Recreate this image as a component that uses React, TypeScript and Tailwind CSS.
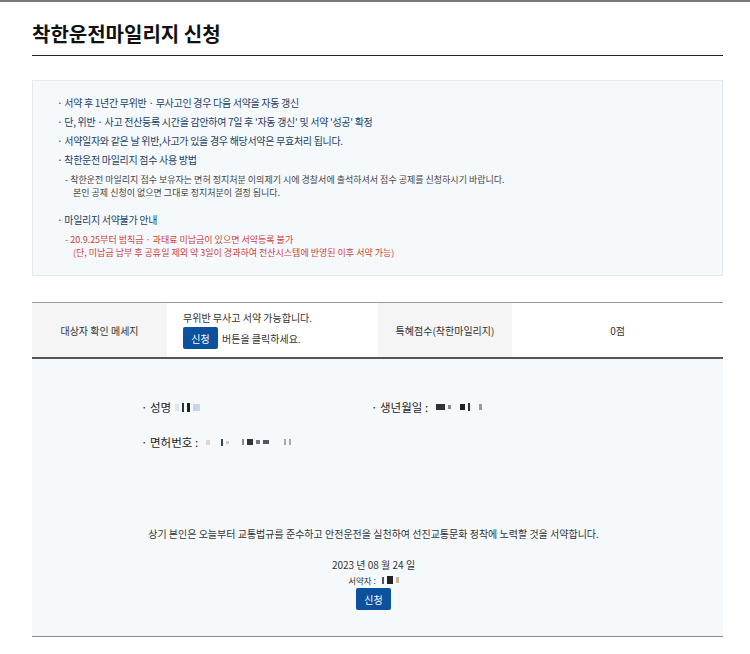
import React from "react";

const font = { fontFamily: '"Noto Sans CJK KR", "Noto Sans", sans-serif' };

function Blur({ blocks }: { blocks: string[] }) {
  // pixelated (censored) value
  return (
    <span className="inline-flex items-center gap-[3px] align-middle">
      {blocks.map((c, i) => (
        <span key={i} className={c} />
      ))}
    </span>
  );
}

function InfoBox() {
  return (
    <div className="mt-[24px] border border-[#e6eaee] bg-[#f6f9fc] pl-[24px] pr-[20px] pt-[12px] pb-[16px] text-[10px] leading-[19px] tracking-[-0.3px] text-[#213e63]">
      <p>· 서약 후 1년간 무위반 · 무사고인 경우 다음 서약을 자동 갱신</p>
      <p>· 단, 위반 · 사고 전산등록 시간을 감안하여 7일 후 '자동 갱신' 및 서약 '성공' 확정</p>
      <p>· 서약일자와 같은 날 위반,사고가 있을 경우 해당서약은 무효처리 됩니다.</p>
      <p>· 착한운전 마일리지 점수 사용 방법</p>
      <div className="pl-[8px] pt-[5px] text-[9px] leading-[12.5px] tracking-normal text-[#444]">
        <p>- 착한운전 마일리지 점수 보유자는 면허 정지처분 이의제기 시에 경찰서에 출석하셔서 점수 공제를 신청하시기 바랍니다.</p>
        <p className="pl-[8px]">본인 공제 신청이 없으면 그대로 정지처분이 결정 됩니다.</p>
      </div>
      <p className="mt-[11px]">· 마일리지 서약불가 안내</p>
      <div className="mt-[4px] pl-[8px] text-[9px] leading-[13px] tracking-normal text-[#cf3f3a]">
        <p>- 20.9.25부터 범칙금 · 과태료 미납금이 있으면 서약등록 불가</p>
        <p className="pl-[8px]">(단, 미납금 납부 후 공휴일 제외 약 3일이 경과하여 전산시스템에 반영된 이후 서약 가능)</p>
      </div>
    </div>
  );
}

function ApplyButton() {
  return (
    <button className="h-[22px] w-[35px] rounded-[2px] bg-[#0b519e] text-[10px] text-white">
      신청
    </button>
  );
}

export default function App() {
  return (
    <div className="min-h-[654px] border-t-2 border-[#7a7a7a] bg-white" style={font}>
      <div className="mx-[32px] w-[691px]">
        <h1 className="pt-[19px] pb-[8px] text-[20px] font-bold leading-[26px] text-[#111] border-b-[1.5px] border-[#222]">
          착한운전마일리지 신청
        </h1>

        <InfoBox />

        <div className="mt-[26px] grid grid-cols-[135px_211px_134px_211px] border-t border-[#9a9a9a] border-b-2 border-b-[#555] text-[10px] text-[#333]">
          <div className="flex h-[54px] items-center justify-center bg-[#f5f5f5]">대상자 확인 메세지</div>
          <div className="flex flex-col justify-center gap-[2px] pl-[16px]">
            <p className="leading-[14px]">무위반 무사고 서약 가능합니다.</p>
            <div className="flex items-center gap-[4px]">
              <ApplyButton />
              <span>버튼을 클릭하세요.</span>
            </div>
          </div>
          <div className="flex items-center justify-center bg-[#f5f5f5]">특혜점수(착한마일리지)</div>
          <div className="flex items-center justify-center">0점</div>
        </div>

        <div className="flex h-[278px] flex-col border-b border-[#8a8a8a] bg-[#f6f9fc] text-[#222]">
          <div className="grid grid-cols-[230px_1fr] pl-[109px] pt-[40px] text-[11.5px] leading-[16px]">
            <div className="flex items-center gap-[4px]">
              <span>· 성명</span>
              <Blur blocks={["h-[7px] w-[4px] bg-[#dbe6f5]", "h-[9px] w-[2px] bg-[#333]", "h-[9px] w-[3px] bg-[#222]", "h-[7px] w-[7px] bg-[#c9d6ea]"]} />
            </div>
            <div className="flex items-center gap-[8px]">
              <span>· 생년월일 :</span>
              <Blur blocks={["h-[6px] w-[9px] bg-[#333]", "h-[4px] w-[3px] bg-[#888]", "ml-[6px] h-[6px] w-[5px] bg-[#222]", "h-[8px] w-[2px] bg-[#333]", "ml-[6px] h-[6px] w-[3px] bg-[#999]"]} />
            </div>
            <div className="col-span-2 mt-[19px] flex items-center gap-[8px]">
              <span>· 면허번호 :</span>
              <Blur blocks={["h-[5px] w-[4px] bg-[#f1d2c0]", "ml-[8px] h-[7px] w-[2px] bg-[#444]", "h-[3px] w-[3px] bg-[#ccc]", "ml-[10px] h-[6px] w-[2px] bg-[#9a8a7c]", "h-[6px] w-[6px] bg-[#333]", "h-[4px] w-[4px] bg-[#777]", "h-[4px] w-[6px] bg-[#556]", "ml-[12px] h-[6px] w-[2px] bg-[#aaa]", "h-[6px] w-[2px] bg-[#aaa]"]} />
            </div>
          </div>

          <div className="pr-[8px]">
            <p className="mt-[77px] text-center text-[10px] leading-[14px] text-[#333]">
              상기 본인은 오늘부터 교통법규를 준수하고 안전운전을 실천하여 선진교통문화 정착에 노력할 것을 서약합니다.
            </p>
            <p className="mt-[17px] text-center text-[10px] leading-[14px] text-[#333]">2023 년 08 월 24 일</p>
            <div className="mt-[2px] flex items-center justify-center gap-[6px] text-[8.5px] leading-[12px] text-[#333]">
              <span>서약자 :</span>
              <Blur blocks={["h-[7px] w-[2px] bg-[#555]", "h-[8px] w-[6px] bg-[#222]", "h-[6px] w-[3px] bg-[#c9b7a0]"]} />
            </div>
            <div className="mt-[2px] flex justify-center">
              <ApplyButton />
            </div>
          </div>
        </div>
      </div>
    </div>
  );
}
